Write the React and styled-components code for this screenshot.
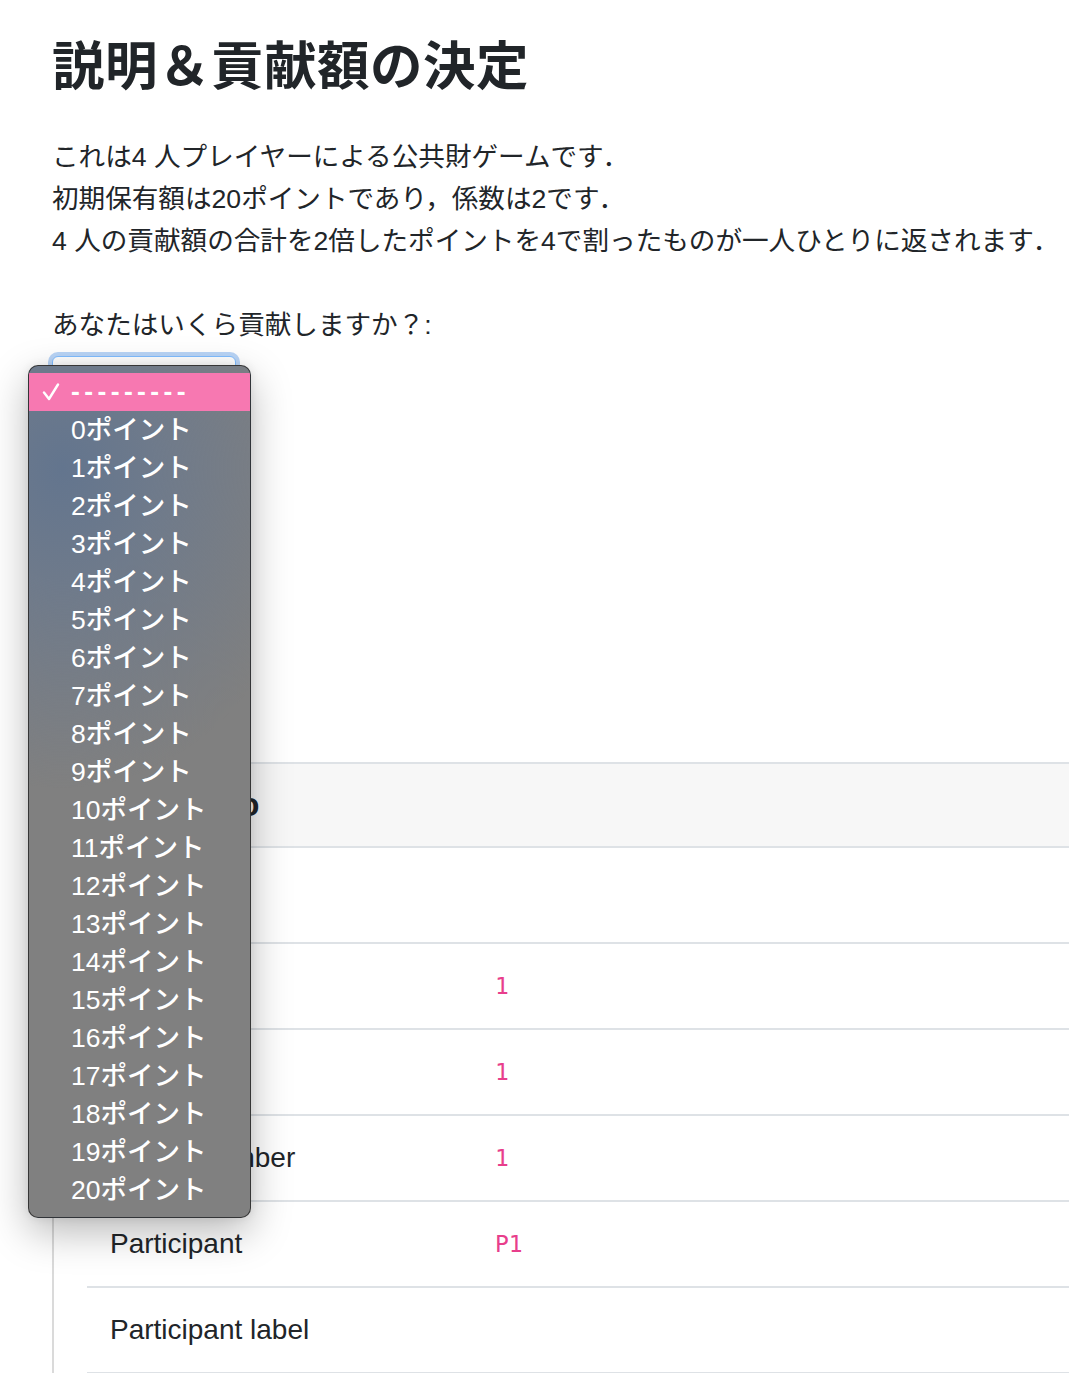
import React from 'react'
import styled, { createGlobalStyle, css } from 'styled-components'

const GlobalStyle = createGlobalStyle`
    body {
        margin: 0;
        background: #fff;
        color: #212529;
        font-family: "Liberation Sans", "Noto Sans CJK JP", sans-serif;
        overflow: hidden;
    }
`

const Page = styled.div`
    position: relative;
    padding: 36px 0 0 52px;
    width: 1100px;
    height: 1373px;
    overflow: hidden;
`

const Title = styled.h1`
    margin: 0;
    font-size: 52.5px;
    line-height: 62px;
    font-weight: 700;
    letter-spacing: 0.5px;
`

const Intro = styled.p`
    margin: 38px 0 0;
    font-size: 26.6px;
    line-height: 42px;
    white-space: nowrap;
`

const Question = styled.label`
    display: block;
    margin-top: 42px;
    font-size: 26.6px;
    line-height: 42px;
`

const SelectBox = styled.div`
    margin-top: 10px;
    width: 184px;
    height: 60px;
    box-sizing: border-box;
    border: 1px solid #80bdff;
    border-radius: 6px;
    box-shadow: 0 0 0 4px #b9d4f6;
    background: #fff;
`

const DebugCard = styled.section`
    margin-top: 346px;
    border-left: 2px solid #dadada;
`

const CardHeader = styled.div`
    height: 82px;
    display: flex;
    align-items: center;
    padding-left: 33px;
    background: #f7f7f7;
    border-top: 2px solid #dee2e6;
    border-bottom: 2px solid #dee2e6;
    font-size: 33px;
    font-weight: 700;
`

const CardBody = styled.div`
    padding-left: 33px;
`

const SectionTitle = styled.div`
    height: 94px;
    display: flex;
    align-items: center;
    padding-left: 23px;
    font-size: 28px;
    font-weight: 700;
`

const InfoRow = styled.div`
    display: grid;
    grid-template-columns: 408px 1fr;
    height: 84px;
    align-items: center;
    border-top: 2px solid #dee2e6;
    &:last-child {
        border-bottom: 2px solid #dee2e6;
    }
`

const InfoLabel = styled.div`
    padding-left: 23px;
    font-size: 28px;
`

const InfoValue = styled.code`
    font-family: "DejaVu Sans Mono", "Liberation Mono", monospace;
    font-size: 23px;
    color: #e83e8c;
`

const OptionMenu = styled.ul`
    position: absolute;
    left: 28px;
    top: 365px;
    width: 223px;
    box-sizing: border-box;
    margin: 0;
    padding: 7px 0 8px;
    list-style: none;
    border: 1px solid rgba(30, 30, 30, 0.75);
    border-radius: 10px;
    background:
        radial-gradient(ellipse 260px 320px at 15% 12%, #63758e 0%, #6e7a8b 35%, rgba(128,128,128,0) 100%),
        #808080;
    box-shadow: 0 14px 40px rgba(0, 0, 0, 0.28), 0 0 10px rgba(0,0,0,0.08);
    overflow: hidden;
`

const OptionItem = styled.li`
    position: relative;
    height: 38px;
    box-sizing: border-box;
    display: flex;
    align-items: center;
    padding: 0 0 5px 42px;
    color: #fff;
    font-size: 26.5px;
    font-weight: 500;
    white-space: nowrap;
    ${props => props.selected && css`
        background: #f778b1;
        padding-bottom: 2px;
    `}
`

const Dashes = styled.span`
    letter-spacing: 4.4px;
    font-family: "Liberation Sans", sans-serif;
    font-weight: 700;
`

const CheckMark = styled.svg`
    position: absolute;
    left: 13px;
    top: 10px;
`

const infoRows = [
    ['ID in group', '1'],
    ['Group', '1'],
    ['Round number', '1'],
    ['Participant', 'P1'],
    ['Participant label', ''],
]

const points = Array.from({ length: 21 }, (_, i) => i)

export default function App() {
    return (
        <Page>
            <GlobalStyle />
            <Title>説明＆貢献額の決定</Title>
            <Intro>
                これは4 人プレイヤーによる公共財ゲームです．<br />
                初期保有額は20ポイントであり，係数は2です．<br />
                4 人の貢献額の合計を2倍したポイントを4で割ったものが一人ひとりに返されます．
            </Intro>
            <Question>あなたはいくら貢献しますか？:</Question>
            <SelectBox />

            <DebugCard>
                <CardHeader>Debug info</CardHeader>
                <CardBody>
                    <SectionTitle>Basic info</SectionTitle>
                    {infoRows.map(([label, value]) => (
                        <InfoRow key={label}>
                            <InfoLabel>{label}</InfoLabel>
                            <div><InfoValue>{value}</InfoValue></div>
                        </InfoRow>
                    ))}
                </CardBody>
            </DebugCard>

            <OptionMenu>
                <OptionItem selected>
                    <CheckMark width="18" height="18" viewBox="0 0 18 18">
                        <polyline points="2,9.5 7,16 16,1.5" fill="none" stroke="#fff" strokeWidth="2.4" strokeLinecap="round" strokeLinejoin="round" />
                    </CheckMark>
                    <Dashes>---------</Dashes>
                </OptionItem>
                {points.map(n => (
                    <OptionItem key={n}>{n}ポイント</OptionItem>
                ))}
            </OptionMenu>
        </Page>
    )
}
